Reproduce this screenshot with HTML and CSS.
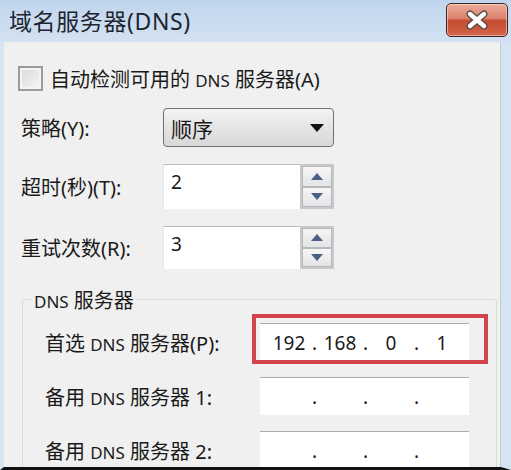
FILE: index.html
```html
<!DOCTYPE html>
<html lang="zh-CN">
<head>
  <meta charset="UTF-8" />
  <title>域名服务器(DNS)</title>
  <link rel="stylesheet" href="styles.css">
</head>
<body>
  <div class="window">
    <div class="titlebar">
      <span class="title">域名服务器(DNS)</span>
      <button class="close-btn" aria-label="关闭">
        <svg width="26" height="20" viewBox="0 0 26 20">
          <path d="M6 4 L20 16 M20 4 L6 16" stroke="#5a4a48" stroke-width="7" stroke-linecap="round" />
          <path d="M6 4 L20 16 M20 4 L6 16" stroke="#ffffff" stroke-width="4.4" stroke-linecap="round" />
        </svg>
      </button>
    </div>

    <div class="client">
      <label class="check-row">
        <span class="checkbox"></span>
        <span>自动检测可用的 <span class="latin">DNS</span> 服务器(A)</span>
      </label>

      <div class="form-grid">
        <span class="label">策略(Y):</span>
        <div class="select">
          <span>顺序</span>
          <svg width="14" height="8" viewBox="0 0 14 8"><path d="M0 0 H14 L7 8 Z" fill="#111" /></svg>
        </div>

        <span class="label">超时(秒)(T):</span>
        <div class="num-input">2</div>
        <div class="spinner">
          <span class="spin up"><svg width="12" height="7" viewBox="0 0 12 7"><path d="M0 7 L6 0 L12 7 Z" fill="#4a5e86" /></svg></span>
          <span class="spin down"><svg width="12" height="7" viewBox="0 0 12 7"><path d="M0 0 L12 0 L6 7 Z" fill="#4a5e86" /></svg></span>
        </div>

        <span class="label">重试次数(R):</span>
        <div class="num-input">3</div>
        <div class="spinner">
          <span class="spin up"><svg width="12" height="7" viewBox="0 0 12 7"><path d="M0 7 L6 0 L12 7 Z" fill="#4a5e86" /></svg></span>
          <span class="spin down"><svg width="12" height="7" viewBox="0 0 12 7"><path d="M0 0 L12 0 L6 7 Z" fill="#4a5e86" /></svg></span>
        </div>
      </div>

      <fieldset class="group">
        <legend><span class="latin">DNS</span> 服务器</legend>

        <div class="ip-row">
          <span class="label">首选 <span class="latin">DNS</span> 服务器(P):</span>
          <div class="ip-input marked">
            <span class="oct">192</span><span class="dot">.</span><span class="oct">168</span><span class="dot">.</span><span class="oct">0</span><span class="dot">.</span><span class="oct">1</span>
          </div>
        </div>

        <div class="ip-row">
          <span class="label">备用 <span class="latin">DNS</span> 服务器 1:</span>
          <div class="ip-input">
            <span class="oct"></span><span class="dot">.</span><span class="oct"></span><span class="dot">.</span><span class="oct"></span><span class="dot">.</span><span class="oct"></span>
          </div>
        </div>

        <div class="ip-row">
          <span class="label">备用 <span class="latin">DNS</span> 服务器 2:</span>
          <div class="ip-input">
            <span class="oct"></span><span class="dot">.</span><span class="oct"></span><span class="dot">.</span><span class="oct"></span><span class="dot">.</span><span class="oct"></span>
          </div>
        </div>
      </fieldset>
    </div>
  </div>
</body>
</html>
```

FILE: styles.css
```css
body {
  margin: 0;
  width: 511px;
  height: 470px;
  overflow: hidden;
  font-family: "Noto Sans", "Noto Sans CJK SC", sans-serif;
  font-size: 20px;
  color: #1a1a1a;
}

.window {
  display: flex;
  flex-direction: column;
  height: 470px;
}

.titlebar {
  height: 42px;
  flex: none;
  display: flex;
  justify-content: space-between;
  align-items: flex-start;
  padding: 0 3px 0 9px;
  background: linear-gradient(#c0d5ed, #d3e2f2);
  box-sizing: border-box;
}

.title {
  font-size: 23px;
  line-height: 42px;
  color: #1e2430;
  letter-spacing: 0.6px;
}

.close-btn {
  width: 62px;
  height: 34px;
  margin-top: 3px;
  padding: 0;
  border: 1px solid #3a2626;
  border-radius: 5px;
  background: linear-gradient(#eeaa9c 0%, #d9826c 45%, #c44a2e 52%, #d2664a 100%);
  box-shadow: inset 0 0 0 1px rgba(255, 220, 210, 0.6);
  display: flex;
  align-items: center;
  justify-content: center;
}

.client {
  flex: 1;
  background: #f0f0f0;
  border-left: 4px solid #d7e4f2;
  border-right: 10px solid #d5e3f3;
  border-bottom: 3px solid #111;
  box-shadow: inset -8px 0 0 -7px #c8ccd2;
  padding: 23px 0 0 14px;
  overflow: hidden;
}

.latin {
  font-size: 17px;
}

/* 체크박스 줄 */
.check-row {
  display: flex;
  align-items: center;
  gap: 7px;
  height: 27px;
}

.checkbox {
  width: 21px;
  height: 21px;
  border: 2px solid #9a9b9c;
  background: linear-gradient(135deg, #d8d8d8, #f6f6f6);
  box-shadow: inset 0 0 0 2px #f4f4f4;
}

.form-grid {
  display: grid;
  grid-template-columns: 145px 137px 34px;
  grid-template-rows: 39px 45px 43px;
  row-gap: 17px;
  margin-top: 16px;
  align-items: center;
}

.label {
  padding-left: 3px;
}

.select {
  grid-column: span 2;
  height: 39px;
  box-sizing: border-box;
  border: 1px solid #707070;
  border-radius: 4px;
  background: linear-gradient(#f4f4f4, #e4e4e4 50%, #d8d8d8);
  display: flex;
  align-items: center;
  justify-content: space-between;
  padding: 0 9px 0 7px;
  font-size: 21px;
}

.num-input {
  height: 100%;
  box-sizing: border-box;
  background: #fff;
  border-top: 1px solid #b8bcc2;
  border-left: 1px solid #e2e6ea;
  padding: 4px 0 0 7px;
  font-size: 19px;
}

.spinner {
  height: 100%;
  box-sizing: border-box;
  border: 2px solid #c7c9cc;
  display: flex;
  flex-direction: column;
  background: #eceded;
}

.spin {
  flex: 1;
  display: flex;
  align-items: center;
  justify-content: center;
  border: 1px solid #b6b8ba;
  background: linear-gradient(#f6f6f6, #e3e4e6);
}

/* DNS 서버 그룹 */
.group {
  margin: 16px 0 0 4px;
  width: 475px;
  box-sizing: border-box;
  border: 1px solid #d8dadc;
  border-bottom: none;
  border-radius: 3px;
  padding: 8px 0 0 19px;
}

.group legend {
  padding: 0 2px;
  margin-left: -10px;
}

.ip-row {
  display: flex;
  align-items: center;
  height: 40px;
  margin-bottom: 14px;
}

.ip-row .label {
  width: 215px;
  flex: none;
}

.ip-input {
  position: relative;
  width: 209px;
  height: 38px;
  box-sizing: border-box;
  background: #fff;
  border-top: 1px solid #a8acb2;
  display: flex;
  align-items: center;
  padding-left: 9px;
  font-size: 19px;
}

.oct {
  width: 40px;
  text-align: center;
}

.dot {
  width: 11px;
  text-align: center;
}

.ip-input.marked::after {
  content: "";
  position: absolute;
  left: -8px;
  top: -10px;
  right: -19px;
  bottom: -3px;
  border: 4px solid #d2434a;
}
```
